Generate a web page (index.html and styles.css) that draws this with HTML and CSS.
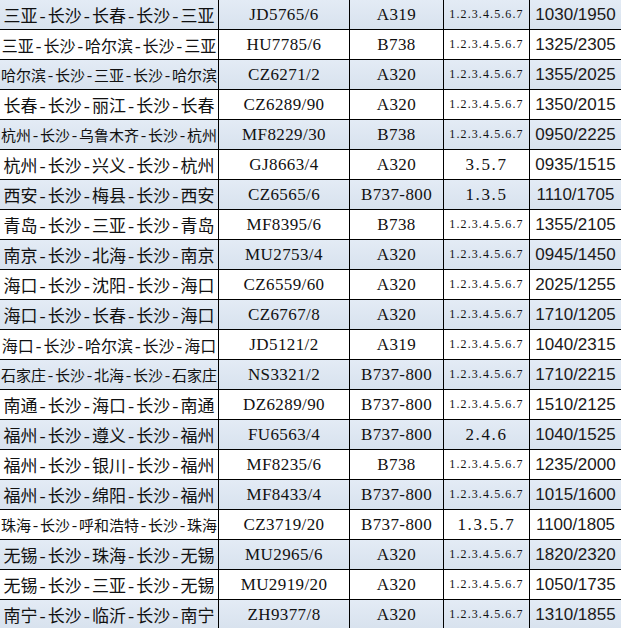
FILE: index.html
```html
<!DOCTYPE html>
<html lang="zh-CN">
<head>
<meta charset="utf-8">
<title>航线表</title>
<link rel="stylesheet" href="styles.css">
</head>
<body>
<div class="sheet">
  <div class="row shade"><div class="c route r10">三亚-长沙-长春-长沙-三亚</div><div class="c code">JD5765/6</div><div class="c code">A319</div><div class="c days">1.2.3.4.5.6.7</div><div class="c time">1030/1950</div></div>
  <div class="row"><div class="c route r11">三亚-长沙-哈尔滨-长沙-三亚</div><div class="c code">HU7785/6</div><div class="c code">B738</div><div class="c days">1.2.3.4.5.6.7</div><div class="c time">1325/2305</div></div>
  <div class="row shade"><div class="c route r12">哈尔滨-长沙-三亚-长沙-哈尔滨</div><div class="c code">CZ6271/2</div><div class="c code">A320</div><div class="c days">1.2.3.4.5.6.7</div><div class="c time">1355/2025</div></div>
  <div class="row"><div class="c route r10">长春-长沙-丽江-长沙-长春</div><div class="c code">CZ6289/90</div><div class="c code">A320</div><div class="c days">1.2.3.4.5.6.7</div><div class="c time">1350/2015</div></div>
  <div class="row shade"><div class="c route r12">杭州-长沙-乌鲁木齐-长沙-杭州</div><div class="c code">MF8229/30</div><div class="c code">B738</div><div class="c days">1.2.3.4.5.6.7</div><div class="c time">0950/2225</div></div>
  <div class="row"><div class="c route r10">杭州-长沙-兴义-长沙-杭州</div><div class="c code">GJ8663/4</div><div class="c code">A320</div><div class="c days big">3.5.7</div><div class="c time">0935/1515</div></div>
  <div class="row shade"><div class="c route r10">西安-长沙-梅县-长沙-西安</div><div class="c code">CZ6565/6</div><div class="c code">B737-800</div><div class="c days big">1.3.5</div><div class="c time">1110/1705</div></div>
  <div class="row"><div class="c route r10">青岛-长沙-三亚-长沙-青岛</div><div class="c code">MF8395/6</div><div class="c code">B738</div><div class="c days">1.2.3.4.5.6.7</div><div class="c time">1355/2105</div></div>
  <div class="row shade"><div class="c route r10">南京-长沙-北海-长沙-南京</div><div class="c code">MU2753/4</div><div class="c code">A320</div><div class="c days">1.2.3.4.5.6.7</div><div class="c time">0945/1450</div></div>
  <div class="row"><div class="c route r10">海口-长沙-沈阳-长沙-海口</div><div class="c code">CZ6559/60</div><div class="c code">A320</div><div class="c days">1.2.3.4.5.6.7</div><div class="c time">2025/1255</div></div>
  <div class="row shade"><div class="c route r10">海口-长沙-长春-长沙-海口</div><div class="c code">CZ6767/8</div><div class="c code">A320</div><div class="c days">1.2.3.4.5.6.7</div><div class="c time">1710/1205</div></div>
  <div class="row"><div class="c route r11">海口-长沙-哈尔滨-长沙-海口</div><div class="c code">JD5121/2</div><div class="c code">A319</div><div class="c days">1.2.3.4.5.6.7</div><div class="c time">1040/2315</div></div>
  <div class="row shade"><div class="c route r12">石家庄-长沙-北海-长沙-石家庄</div><div class="c code">NS3321/2</div><div class="c code">B737-800</div><div class="c days">1.2.3.4.5.6.7</div><div class="c time">1710/2215</div></div>
  <div class="row"><div class="c route r10">南通-长沙-海口-长沙-南通</div><div class="c code">DZ6289/90</div><div class="c code">B737-800</div><div class="c days">1.2.3.4.5.6.7</div><div class="c time">1510/2125</div></div>
  <div class="row shade"><div class="c route r10">福州-长沙-遵义-长沙-福州</div><div class="c code">FU6563/4</div><div class="c code">B737-800</div><div class="c days big">2.4.6</div><div class="c time">1040/1525</div></div>
  <div class="row"><div class="c route r10">福州-长沙-银川-长沙-福州</div><div class="c code">MF8235/6</div><div class="c code">B738</div><div class="c days">1.2.3.4.5.6.7</div><div class="c time">1235/2000</div></div>
  <div class="row shade"><div class="c route r10">福州-长沙-绵阳-长沙-福州</div><div class="c code">MF8433/4</div><div class="c code">B737-800</div><div class="c days">1.2.3.4.5.6.7</div><div class="c time">1015/1600</div></div>
  <div class="row"><div class="c route r12">珠海-长沙-呼和浩特-长沙-珠海</div><div class="c code">CZ3719/20</div><div class="c code">B737-800</div><div class="c days big">1.3.5.7</div><div class="c time">1100/1805</div></div>
  <div class="row shade"><div class="c route r10">无锡-长沙-珠海-长沙-无锡</div><div class="c code">MU2965/6</div><div class="c code">A320</div><div class="c days">1.2.3.4.5.6.7</div><div class="c time">1820/2320</div></div>
  <div class="row"><div class="c route r10">无锡-长沙-三亚-长沙-无锡</div><div class="c code">MU2919/20</div><div class="c code">A320</div><div class="c days">1.2.3.4.5.6.7</div><div class="c time">1050/1735</div></div>
  <div class="row shade"><div class="c route r10">南宁-长沙-临沂-长沙-南宁</div><div class="c code">ZH9377/8</div><div class="c code">A320</div><div class="c days">1.2.3.4.5.6.7</div><div class="c time">1310/1855</div></div>
</div>
</body>
</html>
```

FILE: styles.css
```css
html, body {
  margin: 0;
  padding: 0;
  overflow: hidden;
  background: #ffffff;
}

.sheet {
  display: flex;
  flex-direction: column;
  width: 621px;
  color: #111;
}

.row {
  display: grid;
  grid-template-columns: 219px 131px 94px 86px 1fr;
  height: 30px;
  box-sizing: border-box;
  border-bottom: 1px solid #000;
  background: #ffffff;
}

.row.shade {
  background: linear-gradient(#e3ebf5, #d8e2ee);
}

.c {
  box-sizing: border-box;
  border-right: 1px solid #000;
  display: flex;
  align-items: center;
  justify-content: center;
  white-space: nowrap;
  overflow: hidden;
}

.c.time {
  border-right: none;
  font-family: "Liberation Sans", Arial, sans-serif;
  font-size: 17px;
  color: #1a1a1a;
}

.route {
  font-family: "Liberation Mono", "Noto Sans CJK SC", monospace;
}

.r10 { font-size: 17px; }
.r11 { font-size: 16px; }
.r12 { font-size: 15px; }

.code {
  font-family: "Liberation Serif", "Times New Roman", serif;
  font-size: 17px;
  letter-spacing: 0.4px;
}

.days {
  font-family: "Liberation Serif", "Times New Roman", serif;
  font-size: 12px;
  letter-spacing: 1.1px;
}

.days.big {
  font-size: 17px;
  letter-spacing: 1.6px;
}
```
